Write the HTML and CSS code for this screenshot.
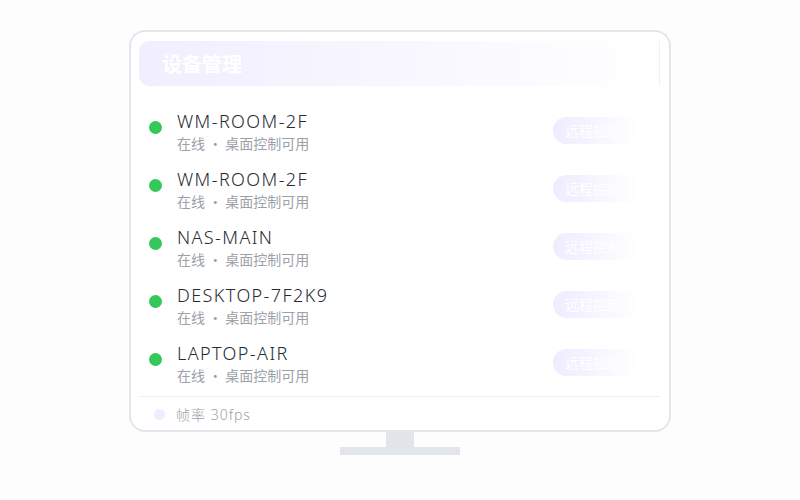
FILE: index.html
```html
<!DOCTYPE html>
<html lang="zh">
<head>
<meta charset="utf-8">
<title>设备管理</title>
<link rel="stylesheet" href="styles.css">
</head>
<body>
<div class="stage">
  <div class="monitor">
    <div class="header"><span class="title">设备管理</span></div>
    <div class="list">
      <div class="row">
        <span class="dot"></span>
        <div class="info"><div class="name">WM-ROOM-2F</div><div class="sub">在线 · 桌面控制可用</div></div>
        <span class="btn">远程控制</span>
      </div>
      <div class="row">
        <span class="dot"></span>
        <div class="info"><div class="name">WM-ROOM-2F</div><div class="sub">在线 · 桌面控制可用</div></div>
        <span class="btn">远程控制</span>
      </div>
      <div class="row">
        <span class="dot"></span>
        <div class="info"><div class="name">NAS-MAIN</div><div class="sub">在线 · 桌面控制可用</div></div>
        <span class="btn">远程控制</span>
      </div>
      <div class="row">
        <span class="dot"></span>
        <div class="info"><div class="name">DESKTOP-7F2K9</div><div class="sub">在线 · 桌面控制可用</div></div>
        <span class="btn">远程控制</span>
      </div>
      <div class="row">
        <span class="dot"></span>
        <div class="info"><div class="name">LAPTOP-AIR</div><div class="sub">在线 · 桌面控制可用</div></div>
        <span class="btn">远程控制</span>
      </div>
    </div>
    <div class="footer"><span class="fdot"></span><span class="ftext">帧率 30fps</span></div>
  </div>
  <div class="neck"></div>
  <div class="base"></div>
</div>
</body>
</html>
```
FILE: styles.css
```css
html, body {
  margin: 0;
  padding: 0;
  background: #fdfdfe;
  font-family: "Noto Sans CJK SC", sans-serif;
}
.stage {
  width: 800px;
  height: 500px;
  display: flex;
  flex-direction: column;
  align-items: center;
  padding-top: 30px;
  box-sizing: border-box;
}
.monitor {
  width: 542px;
  height: 402px;
  box-sizing: border-box;
  border: 2px solid #e3e6ea;
  border-radius: 16px;
  background: #ffffff;
  padding: 9px 9px 0 8px;
  display: flex;
  flex-direction: column;
}
.header {
  height: 45px;
  border-radius: 10px 0 0 10px;
  background: linear-gradient(90deg, #f1eefe 0%, #f8f7ff 50%, #ffffff 100%);
  border-right: 1px solid #eef0f3;
  display: flex;
  align-items: center;
  padding-left: 23px;
}
.title {
  color: #ffffff;
  font-size: 20px;
  font-weight: 700;
}
.list {
  display: flex;
  flex-direction: column;
  gap: 12px;
  padding-top: 24px;
}
.row {
  display: flex;
  align-items: flex-start;
  padding-left: 10px;
  padding-right: 17px;
  height: 46px;
}
.dot {
  width: 13px;
  height: 13px;
  border-radius: 50%;
  background: #34c759;
  margin-top: 11px;
  flex: none;
}
.info {
  margin-left: 15px;
  flex: 1;
}
.name {
  font-family: "Noto Sans", "Noto Sans CJK SC", sans-serif;
  font-weight: 300;
  font-size: 18px;
  line-height: 23px;
  color: #262a31;
  letter-spacing: 1.4px;
}
.sub {
  font-size: 14px;
  line-height: 21px;
  color: #9ca1a9;
}
.btn {
  width: 90px;
  height: 27px;
  margin-top: 7px;
  border-radius: 14px;
  background: linear-gradient(90deg, #efecfe 0%, #f6f4ff 45%, #ffffff 95%);
  color: #ffffff;
  font-size: 14px;
  line-height: 27px;
  padding-left: 12px;
  box-sizing: border-box;
}
.footer {
  margin-top: 8px;
  border-top: 1px solid #eceef1;
  display: flex;
  align-items: center;
  padding: 6px 0 0 15px;
  height: 22px;
}
.fdot {
  width: 11px;
  height: 11px;
  border-radius: 50%;
  background: #f0edfd;
}
.ftext {
  font-family: "Noto Sans", "Noto Sans CJK SC", sans-serif;
  font-weight: 300;
  margin-left: 11px;
  font-size: 14px;
  letter-spacing: 1px;
  color: #9ca1a9;
}
.neck {
  width: 28px;
  height: 15px;
  background: #e2e5e9;
}
.base {
  width: 120px;
  height: 8px;
  background: #e2e5e9;
}
```
